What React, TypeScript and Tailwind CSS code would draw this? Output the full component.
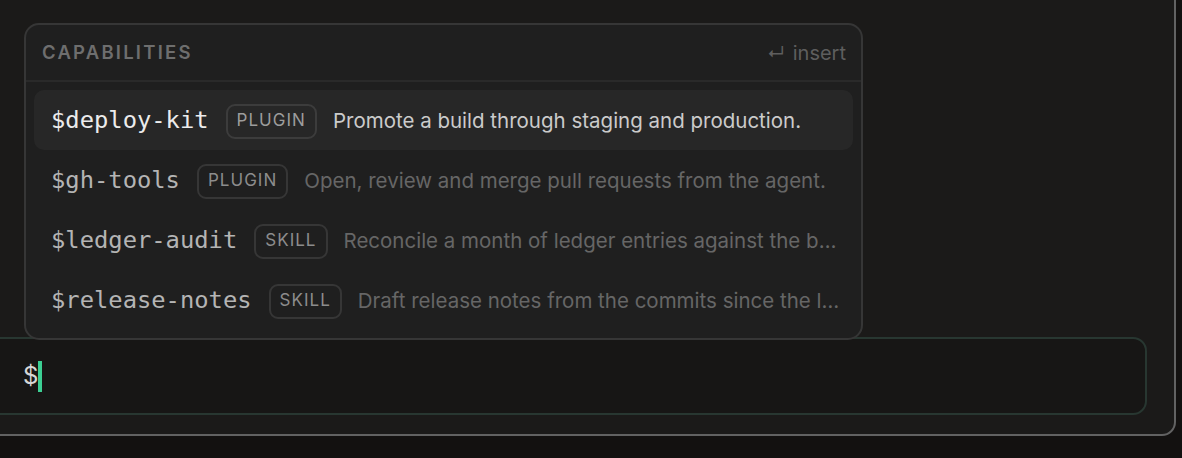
import React from 'react'

interface Capability {
  name: string
  kind: 'PLUGIN' | 'SKILL'
  description: string
}

const capabilities: Capability[] = [
  { name: '$deploy-kit', kind: 'PLUGIN', description: 'Promote a build through staging and production.' },
  { name: '$gh-tools', kind: 'PLUGIN', description: 'Open, review and merge pull requests from the agent.' },
  { name: '$ledger-audit', kind: 'SKILL', description: 'Reconcile a month of ledger entries against the bank statement.' },
  { name: '$release-notes', kind: 'SKILL', description: 'Draft release notes from the commits since the last tag.' },
]

const mono = { fontFamily: '"DejaVu Sans Mono", "Liberation Mono", monospace' }
const sans = { fontFamily: 'Inter, "Noto Sans", sans-serif' }

function CapabilityRow({ item, active }: { item: Capability; active: boolean }) {
  return (
    <div
      className={`flex items-center h-[60px] pl-[17px] pr-[10px] pt-[2px] rounded-[10px] ${active ? 'bg-[#272727]' : ''}`}
    >
      <span
        style={mono}
        className={`text-[23.8px] leading-none shrink-0 ${active ? 'text-[#ececec]' : 'text-[#b4b4b4]'}`}
      >
        {item.name}
      </span>
      <span
        style={sans}
        className={`ml-[17px] shrink-0 h-[35px] px-[9px] flex items-center rounded-[9px] border-2 text-[17px] tracking-[0.06em] ${
          active ? 'border-[#3c3c3c] text-[#9c9c9c]' : 'border-[#363636] text-[#8c8c8c]'
        }`}
      >
        {item.kind}
      </span>
      <span
        style={sans}
        className={`ml-4 min-w-0 truncate text-[20.5px] ${active ? 'text-[#cbcbcb]' : 'text-[#666666]'}`}
      >
        {item.description}
      </span>
    </div>
  )
}

function CapabilityMenu() {
  return (
    <div className="absolute left-[42px] top-[41px] w-[839px] h-[317px] rounded-[15px] border-2 border-[#363636] bg-[#1f1f1f] flex flex-col overflow-hidden">
      <div className="h-[57px] shrink-0 flex items-center justify-between pl-[16px] pr-[15px] border-b-2 border-[#2a2a2a]">
        <span style={sans} className="text-[18.5px] font-semibold tracking-[0.12em] text-[#6e6e6e] pt-[1px]">
          CAPABILITIES
        </span>
        <span style={sans} className="text-[20px] text-[#5e5e5e] flex items-center gap-[8px] pt-[1px]">
          <span className="text-[18px]">↵</span>
          insert
        </span>
      </div>
      <div className="flex flex-col px-[8px] pt-[8px]">
        {capabilities.map((item, i) => (
          <CapabilityRow key={item.name} item={item} active={i === 0} />
        ))}
      </div>
    </div>
  )
}

export default function App() {
  return (
    <div className="w-[1182px] h-[458px] bg-[#131110] overflow-hidden">
      <div className="relative -ml-[20px] -mt-[20px] w-[1196px] h-[456px] rounded-br-[14px] border-2 border-[#626262] bg-[#1b1a19] flex flex-col justify-end pr-[27px] pb-[19px]">
        <div className="h-[78px] rounded-[14px] border-2 border-[#283731] bg-[#171615] flex items-center pl-[39px]">
          <span style={sans} className="text-[24px] text-[#d6d6d6] leading-none">$</span>
          <span className="w-[4px] h-[31px] bg-[#3ccf93]" />
        </div>
        <CapabilityMenu />
      </div>
    </div>
  )
}
